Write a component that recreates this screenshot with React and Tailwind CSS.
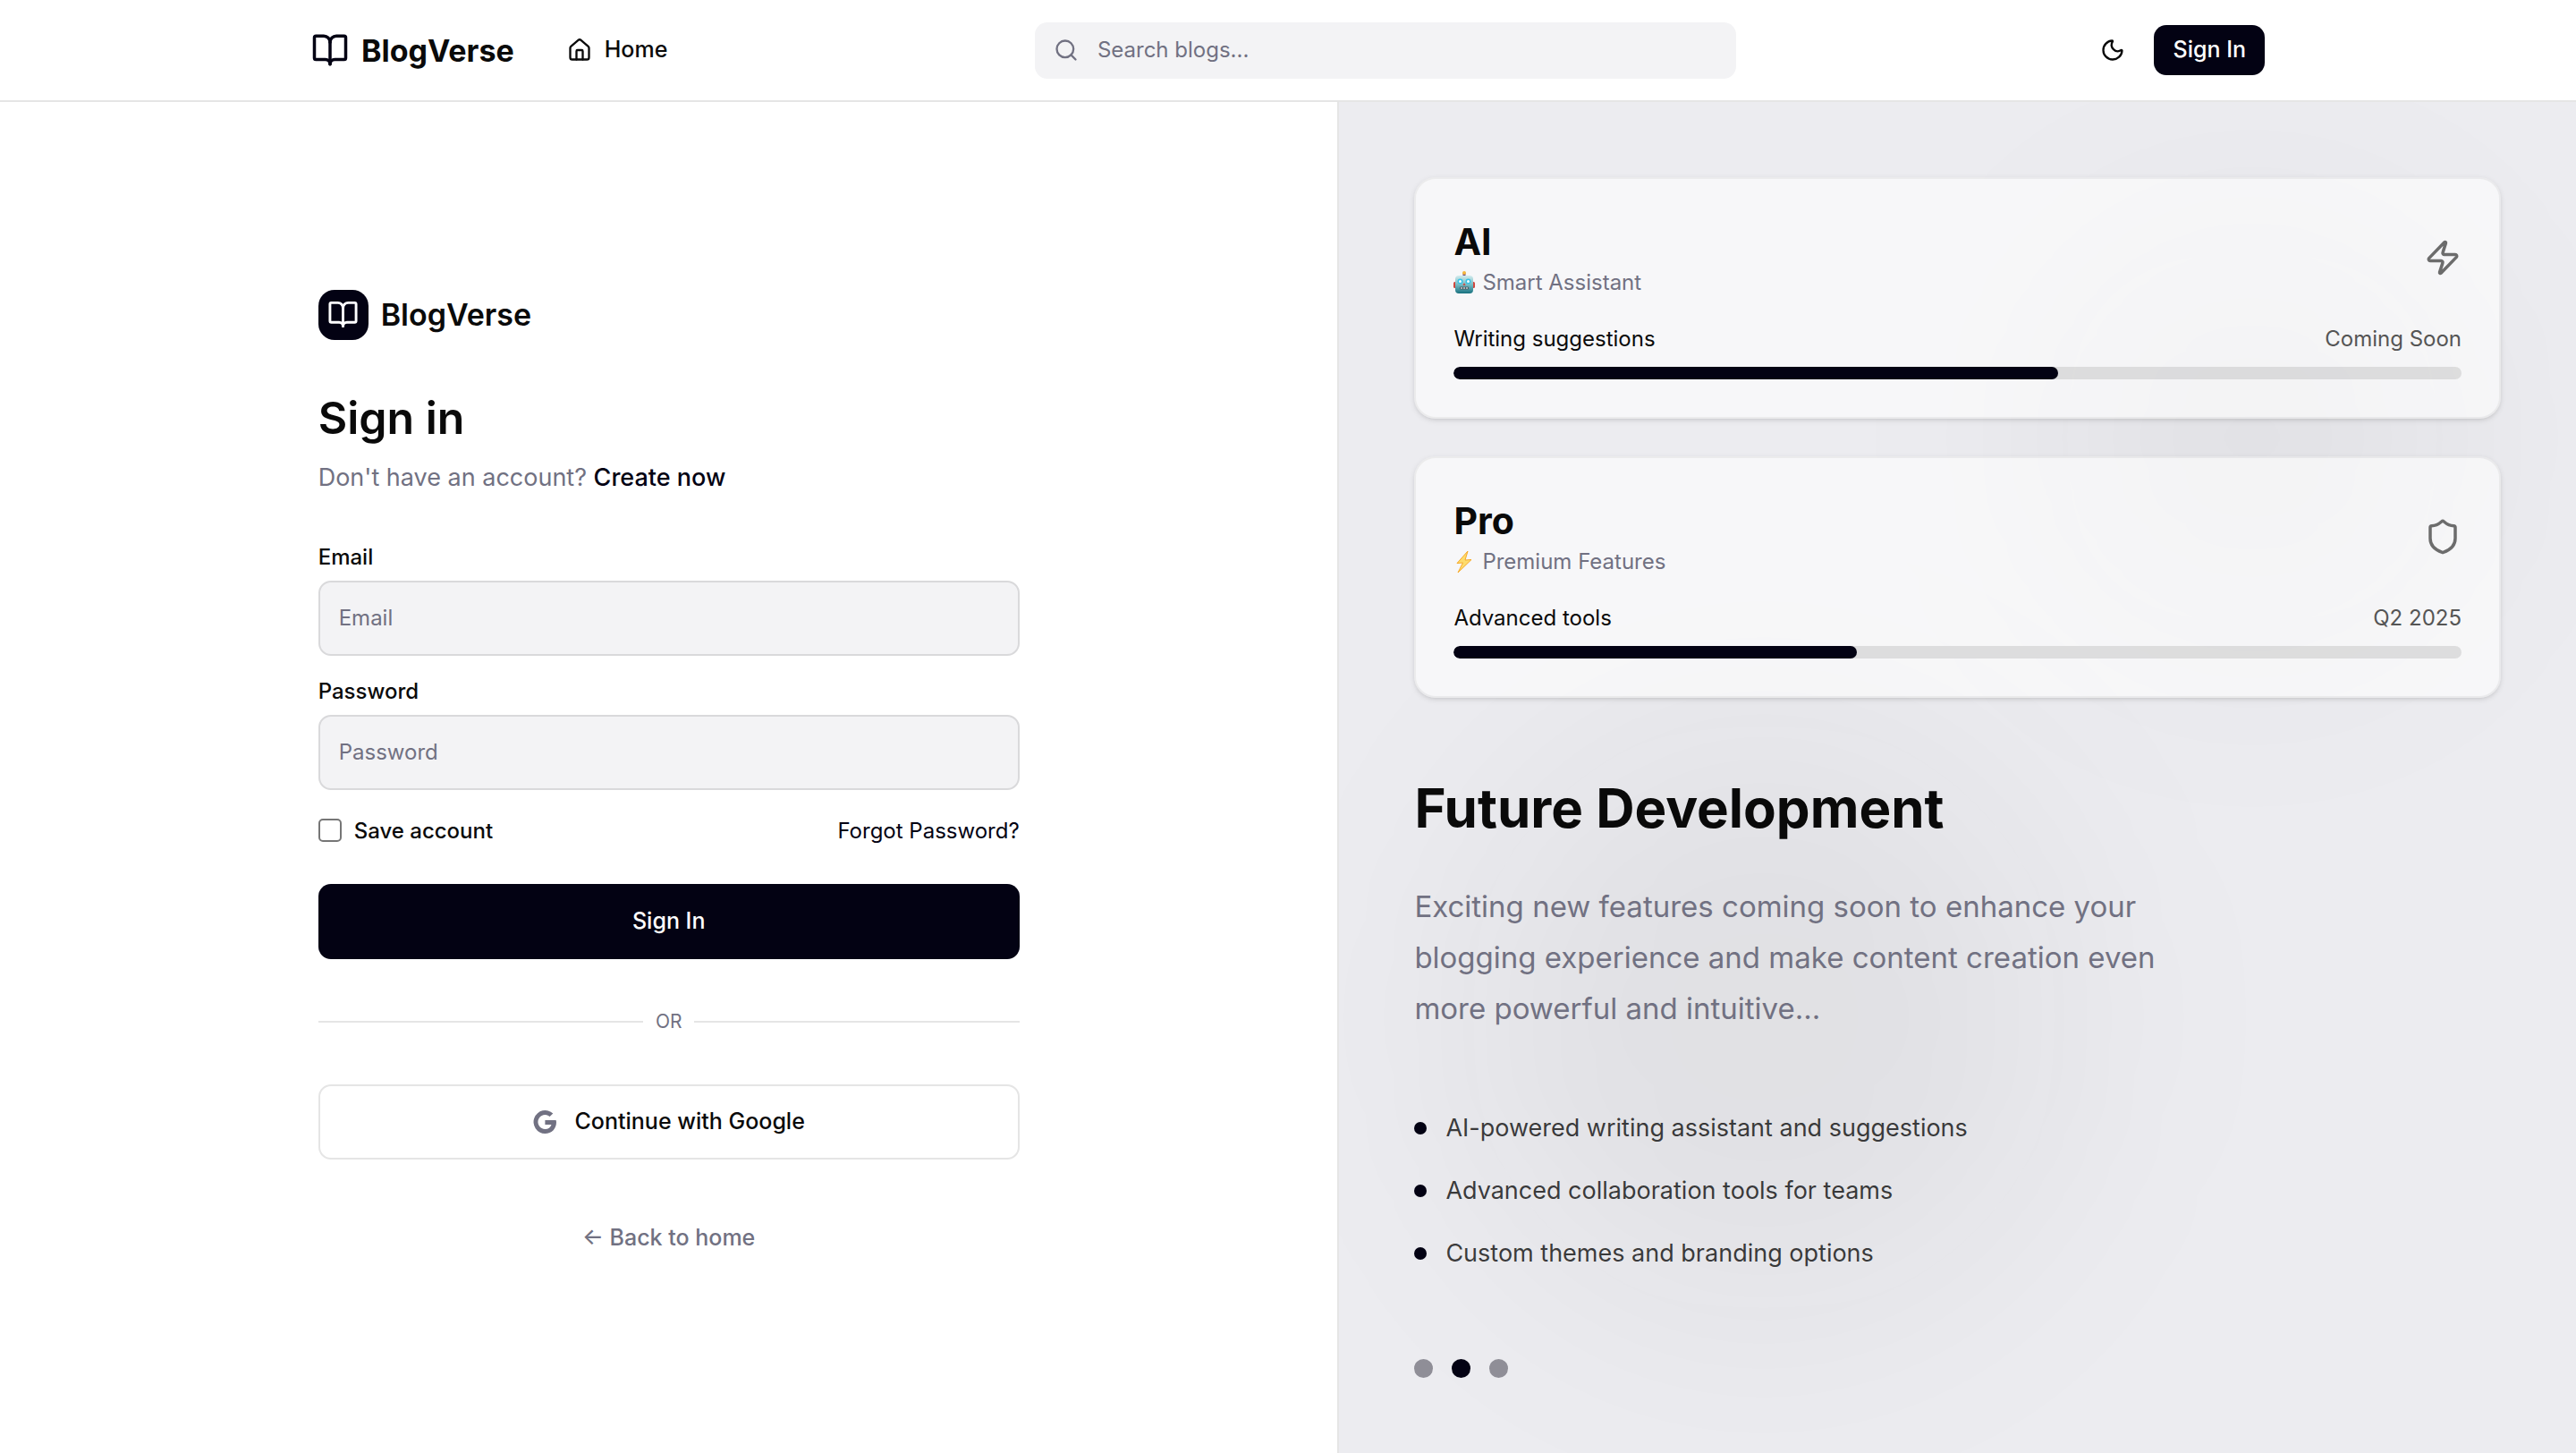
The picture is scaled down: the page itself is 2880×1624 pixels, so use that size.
import React from "react";
import { BookOpen, House, Moon, Search, Shield, Zap } from "lucide-react";

function GoogleIcon() {
  return (
    <svg viewBox="0 0 26 26" className="size-[26px] fill-[#717182]" aria-hidden="true">
      <path d="M25.6 10.9H13.4v5h7.1c-.9 3.1-3.5 5-7.1 5a7.9 7.9 0 1 1 5.2-13.8l3.7-3.7A13 13 0 1 0 13.3 26c7.5 0 12.700-5.3 12.700-12.700 0-.9-.2-1.600-.4-2.400z" />
    </svg>
  );
}

function RobotIcon() {
  return (
    <svg viewBox="0 0 24 26" className="h-[26px] w-6" aria-hidden="true">
      <defs>
        <linearGradient id="robot-face" x1="0" y1="0" x2="0" y2="1">
          <stop offset="0" stopColor="#d3ecee" />
          <stop offset="0.55" stopColor="#6fb6bf" />
          <stop offset="1" stopColor="#17717f" />
        </linearGradient>
      </defs>
      <rect x="0" y="12" width="4" height="7" rx="1.5" fill="#d0473e" />
      <rect x="20" y="12" width="4" height="7" rx="1.5" fill="#d0473e" />
      <rect x="10.5" y="2" width="3" height="4" fill="#6b4a86" />
      <circle cx="12" cy="2" r="2" fill="#f6b73c" />
      <rect x="2" y="5" width="20" height="20" rx="4" fill="url(#robot-face)" />
      <circle cx="7.5" cy="11.5" r="3" fill="#38c3e8" />
      <circle cx="16.5" cy="11.5" r="3" fill="#38c3e8" />
      <circle cx="7.5" cy="11.5" r="1.5" fill="#fff" />
      <circle cx="16.5" cy="11.5" r="1.5" fill="#fff" />
      <path d="M12 13l1.5 3h-3z" fill="#d0473e" />
      <rect x="7" y="17.5" width="10" height="3" rx="1" fill="#4a5a63" />
      <path d="M9 18v2M12 18v2M15 18v2" stroke="#fff" strokeWidth="1" />
    </svg>
  );
}

function BoltIcon() {
  return (
    <svg viewBox="0 0 24 26" className="h-[26px] w-6" aria-hidden="true">
      <path d="M16 1L4 14.5l6.500-.5L5 25l15-14.500-7 .5z" fill="#fddc6c" stroke="#f7a928" strokeWidth="1" strokeLinejoin="round" />
    </svg>
  );
}

function FeatureCard({ title, emoji, subtitle, icon: Icon, label, status, progress }) {
  return (
    <article className="rounded-3xl border-2 border-black/5 bg-white/60 p-[42px] shadow-[0_2px_6px_rgba(0,0,0,0.1),0_2px_4px_-2px_rgba(0,0,0,0.1)]">
      <div className="flex items-center justify-between">
        <div>
          <h3 className="text-[41px] leading-14 font-bold">{title}</h3>
          <p className="flex items-center gap-2 text-2xl leading-[35px] text-[#717182]">
            {emoji}
            {subtitle}
          </p>
        </div>
        <Icon className="size-[42px] text-[#6c6c6c]" />
      </div>
      <div className="mt-7 flex justify-between text-2xl leading-[35px]">
        <span>{label}</span>
        <span className="text-[#555555]">{status}</span>
      </div>
      <div className="mt-3.5 h-3.5 overflow-hidden rounded-full bg-black/10">
        <div className="h-full rounded-full bg-[#030213]" style={{ width: `${progress}%` }} />
      </div>
    </article>
  );
}

function Field({ id, label, type }) {
  return (
    <div className="flex flex-col gap-3.5">
      <label htmlFor={id} className="text-2xl leading-6 font-medium">{label}</label>
      <input
        id={id}
        type={type}
        placeholder={label}
        className="h-21 rounded-[14px] border-2 border-[#d9d9db] bg-[#f3f3f5] px-[21px] text-2xl placeholder:text-[#717182] placeholder:opacity-100"
      />
    </div>
  );
}

const upcoming = [
  "AI-powered writing assistant and suggestions",
  "Advanced collaboration tools for teams",
  "Custom themes and branding options",
];

export default function App() {
  return (
    <div className="flex min-h-screen flex-col bg-white font-['Inter',sans-serif] text-[#0a0a0a]">
      <header className="border-b-2 border-[#e5e5e5]">
        <div className="mx-auto flex h-28 max-w-[2240px] items-center justify-between px-7">
          <div className="flex items-center gap-[38px]">
            <a href="#" className="flex items-center gap-3.5 text-[34px] font-bold">
              <BookOpen className="size-[42px] text-[#030213]" />
              BlogVerse
            </a>
            <a href="#" className="flex items-center gap-3.5 px-[21px] text-[25px] font-medium">
              <House className="size-7" />
              Home
            </a>
          </div>
          <label className="flex h-[63px] w-full max-w-[784px] items-center gap-[21px] rounded-[14px] bg-[#f3f3f5] px-[21px]">
            <Search className="size-7 text-[#717182]" />
            <input
              type="search"
              aria-label="Search blogs"
              placeholder="Search blogs..."
              className="min-w-0 flex-1 bg-transparent text-2xl placeholder:text-[#717182] placeholder:opacity-100"
            />
          </label>
          <div className="flex items-center gap-3.5">
            <button type="button" aria-label="Toggle theme" className="flex h-14 w-16 items-center justify-center">
              <Moon className="size-7" />
            </button>
            <button type="button" className="h-14 rounded-[14px] bg-[#030213] px-[21px] text-[25px] font-medium text-white">
              Sign In
            </button>
          </div>
        </div>
      </header>

      <main className="grid flex-1 grid-cols-[1.08fr_1fr]">
        <section className="flex items-center justify-center px-14">
          <div className="flex w-full max-w-[784px] flex-col pb-3.5">
            <div className="flex items-center gap-3.5 text-[34px] leading-14 font-semibold">
              <span className="flex size-14 items-center justify-center rounded-[18px] bg-[#030213] text-white">
                <BookOpen className="size-[35px]" />
              </span>
              BlogVerse
            </div>
            <h1 className="mt-14 text-[50px] leading-[63px] font-semibold">Sign in</h1>
            <p className="mt-3.5 text-[27px] leading-[42px] text-[#717182]">
              Don't have an account?{" "}
              <a href="#" className="font-medium text-[#030213]">Create now</a>
            </p>
            <form className="mt-14 flex flex-col gap-7">
              <Field id="email" label="Email" type="email" />
              <Field id="password" label="Password" type="password" />
              <div className="flex items-center justify-between text-2xl leading-[35px]">
                <label className="flex items-center gap-3.5 font-medium">
                  <input type="checkbox" className="size-[26px] appearance-none rounded-[5px] border-2 border-[#767676] bg-white" />
                  Save account
                </label>
                <a href="#" className="text-[#030213]">Forgot Password?</a>
              </div>
              <button type="submit" className="mt-3.5 h-21 rounded-[14px] bg-[#030213] text-[25px] font-medium text-white">
                Sign In
              </button>
            </form>
            <div className="my-14 flex items-center gap-3.5 text-[21px] leading-7 text-[#717182]">
              <span className="h-0.5 flex-1 bg-[#e5e5e5]" />
              OR
              <span className="h-0.5 flex-1 bg-[#e5e5e5]" />
            </div>
            <button type="button" className="flex h-21 items-center justify-center gap-[21px] rounded-[14px] border-2 border-[#e5e5e5] text-[25px] font-medium">
              <GoogleIcon />
              Continue with Google
            </button>
            <a href="#" className="mt-[70px] text-center text-[25px] leading-[35px] font-medium text-[#717182]">
              ← Back to home
            </a>
          </div>
        </section>

        <section className="relative overflow-hidden border-l-2 border-[#e5e5e5] bg-[#ececf0] p-21">
          <div className="absolute top-[10%] right-[10%] size-112 rounded-full bg-[#0a0a0a]/5 blur-[128px]" />
          <div className="absolute bottom-[10%] left-[10%] size-168 rounded-full bg-[#0a0a0a]/5 blur-[128px]" />
          <div className="relative flex h-full flex-col">
            <div className="flex flex-col gap-[42px]">
              <FeatureCard
                title="AI"
                emoji={<RobotIcon />}
                subtitle="Smart Assistant"
                icon={Zap}
                label="Writing suggestions"
                status="Coming Soon"
                progress={60}
              />
              <FeatureCard
                title="Pro"
                emoji={<BoltIcon />}
                subtitle="Premium Features"
                icon={Shield}
                label="Advanced tools"
                status="Q2 2025"
                progress={40}
              />
            </div>
            <h2 className="mt-21 text-[60px] leading-[79px] font-bold">Future Development</h2>
            <p className="mt-[42px] max-w-[864px] text-[33px] leading-[57px] text-[#717182]">
              Exciting new features coming soon to enhance your blogging experience and make content creation even more powerful and intuitive...
            </p>
            <ul className="mt-21 flex flex-col gap-7 text-[27px] leading-[42px] text-[#0a0a0a]/80">
              {upcoming.map((item) => (
                <li key={item} className="flex items-center gap-[21px]">
                  <span className="size-3.5 rounded-full bg-[#030213]" />
                  {item}
                </li>
              ))}
            </ul>
            <div className="mt-auto flex gap-[21px]">
              <button type="button" aria-label="Slide 1" className="size-[21px] rounded-full bg-[#8f8e97]" />
              <button type="button" aria-label="Slide 2" className="size-[21px] rounded-full bg-[#030213]" />
              <button type="button" aria-label="Slide 3" className="size-[21px] rounded-full bg-[#8f8e97]" />
            </div>
          </div>
        </section>
      </main>
    </div>
  );
}
